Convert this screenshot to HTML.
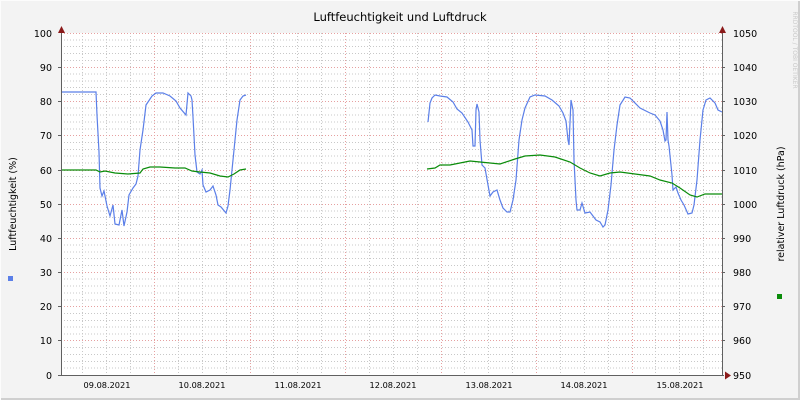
<!DOCTYPE html>
<html><head><style>
body{margin:0;background:#f3f3f3}
svg{display:block}
text{font-family:"DejaVu Sans","Liberation Sans",sans-serif;fill:#000}
</style></head><body>
<svg width="800" height="400" xmlns="http://www.w3.org/2000/svg">
<rect width="800" height="400" fill="#f3f3f3"/>
<rect x="798" y="0" width="2" height="400" fill="#cfcfcf"/>
<rect x="0" y="398" width="800" height="2" fill="#cfcfcf"/>
<rect x="0" y="0" width="800" height="1" fill="#fcfcfc"/>
<rect x="0" y="0" width="1" height="400" fill="#fcfcfc"/>
<rect x="61" y="33" width="661" height="342" fill="#ffffff"/>
<g id="grid" stroke-width="1" shape-rendering="crispEdges">
<g stroke="#c8c8c8" stroke-dasharray="1,2">
<path d="M61 368.2H722M61 361.3H722M61 354.5H722M61 347.6H722M61 334H722M61 327.1H722M61 320.3H722M61 313.4H722M61 299.8H722M61 292.9H722M61 286.1H722M61 279.2H722M61 265.6H722M61 258.7H722M61 251.9H722M61 245H722M61 231.4H722M61 224.5H722M61 217.7H722M61 210.8H722M61 197.2H722M61 190.3H722M61 183.5H722M61 176.6H722M61 163H722M61 156.1H722M61 149.3H722M61 142.4H722M61 128.8H722M61 121.9H722M61 115.1H722M61 108.2H722M61 94.6H722M61 87.7H722M61 80.9H722M61 74H722M61 60.4H722M61 53.5H722M61 46.7H722M61 39.8H722"/>
<path d="M82.5 33V375M106.5 33V375M130.5 33V375M178.5 33V375M202.5 33V375M226.5 33V375M273.5 33V375M297.5 33V375M321.5 33V375M369.5 33V375M393.5 33V375M417.5 33V375M464.5 33V375M488.5 33V375M512.5 33V375M560.5 33V375M584.5 33V375M608.5 33V375M655.5 33V375M679.5 33V375M703.5 33V375"/>
</g>
<g stroke="#e6a0a0" stroke-dasharray="1,2">
<path d="M61 33.5H722M61 67.5H722M61 101.5H722M61 135.5H722M61 170.5H722M61 204.5H722M61 238.5H722M61 272.5H722M61 306.5H722M61 340.5H722"/>
<path d="M154.5 33V375M250.5 33V375M345.5 33V375M441.5 33V375M536.5 33V375M632.5 33V375"/>
</g>
</g>
<g fill="none" stroke-width="1.2" stroke-linejoin="miter">
<polyline stroke="#5b7fe8" points="61,92 96,92 97,115 99,152 100,188 102,196 104,191 107,206 110,216 113,205 115,224 119,225 122,210 124,226 127,212 129,195 133,188 136,184 138,176 140,150 143,130 146,105 152,96 156,93 163,93 170,96 176,101 180,108 186,115 188,93 191,96 192,100 193,117 195,155 197,172 200,174 202,170 203,185 206,192 210,190 213,186 216,195 218,205 221,207 226,213 228,206 230,190 234,150 237,120 240,100 243,96 246,95"/>
<polyline stroke="#5b7fe8" points="428,122 430,103 432,98 435,95 440,96 447,97 453,102 457,109 462,113 468,122 472,130 473,146 475,146 476,110 477,104 479,112 480,140 482,165 485,168 488,185 490,196 493,192 497,190 500,200 503,208 507,212 510,212 513,200 516,180 519,140 522,120 525,108 530,97 535,95 545,96 552,100 559,106 563,113 566,121 568,140 569,145 571,100 573,110 574,160 576,200 577,210 580,210 582,203 585,213 590,212 596,220 600,222 603,227 605,225 608,210 611,185 614,150 617,125 620,105 625,97 630,98 640,108 650,113 655,115 660,121 663,130 665,141 666,140 667,112 668,140 669,146 672,175 673,190 676,187 678,193 681,200 684,205 688,214 692,213 694,205 697,180 700,140 703,110 706,100 710,98 715,103 718,110 722,112"/>
<polyline stroke="#0a8c0a" points="61,170 96,170 100,172 105,171 115,173 128,174 140,173 143,169 150,167 160,167 175,168 185,168 192,171 200,172 210,173 220,176 228,177 234,174 240,170 246,169"/>
<polyline stroke="#0a8c0a" points="427,169 435,168 440,165 450,165 460,163 470,161 480,162 490,163 500,164 515,159 525,156 540,155 555,157 570,162 580,168 590,173 600,176 610,173 620,172 635,174 650,176 660,180 672,183 680,188 690,195 697,197 705,194 715,194 722,194"/>
</g>
<g stroke="#606060" stroke-width="1" shape-rendering="crispEdges">
<path d="M61.5 30V376M722.5 30V376M58 375.5H724"/>
<path d="M58 67.5H61M58 101.5H61M58 135.5H61M58 170.5H61M58 204.5H61M58 238.5H61M58 272.5H61M58 306.5H61M58 340.5H61M722 67.5H725M722 101.5H725M722 135.5H725M722 170.5H725M722 204.5H725M722 238.5H725M722 272.5H725M722 306.5H725M722 340.5H725"/>
</g>
<g fill="#8b1a1a">
<path d="M58 33L61.5 26L65 33Z"/>
<path d="M719 33L722.5 26L726 33Z"/>
<path d="M725 371.5L731 375.5L725 379.5Z"/>
</g>
<text x="400" y="21" font-size="11.5" text-anchor="middle">Luftfeuchtigkeit und Luftdruck</text>
<g font-size="9.5" text-anchor="end">
<text x="52" y="37">100</text><text x="52" y="71">90</text><text x="52" y="105">80</text><text x="52" y="139">70</text><text x="52" y="174">60</text><text x="52" y="208">50</text><text x="52" y="242">40</text><text x="52" y="276">30</text><text x="52" y="310">20</text><text x="52" y="344">10</text><text x="52" y="379">0</text>
</g>
<g font-size="9.5">
<text x="733" y="37">1050</text><text x="733" y="71">1040</text><text x="733" y="105">1030</text><text x="733" y="139">1020</text><text x="733" y="174">1010</text><text x="733" y="208">1000</text><text x="733" y="242">990</text><text x="733" y="276">980</text><text x="733" y="310">970</text><text x="733" y="344">960</text><text x="733" y="379">950</text>
</g>
<g font-size="8.2" text-anchor="middle">
<text x="107" y="388">09.08.2021</text><text x="202" y="388">10.08.2021</text><text x="298" y="388">11.08.2021</text><text x="393" y="388">12.08.2021</text><text x="489" y="388">13.08.2021</text><text x="584" y="388">14.08.2021</text><text x="680" y="388">15.08.2021</text>
</g>
<text font-size="9.5" text-anchor="middle" transform="translate(16,204) rotate(-90)">Luftfeuchtigkeit (%)</text>
<text font-size="9.5" text-anchor="middle" transform="translate(784,204) rotate(-90)">relativer Luftdruck (hPa)</text>
<text font-size="6" text-anchor="middle" transform="translate(793,50) rotate(90)" style="fill:#c8c8c8">RRDTOOL / TOBI OETIKER</text>
<rect x="8" y="276" width="5" height="5" fill="#5b7fe8"/>
<rect x="777" y="294" width="5" height="5" fill="#0a8c0a"/>
</svg>
</body></html>
